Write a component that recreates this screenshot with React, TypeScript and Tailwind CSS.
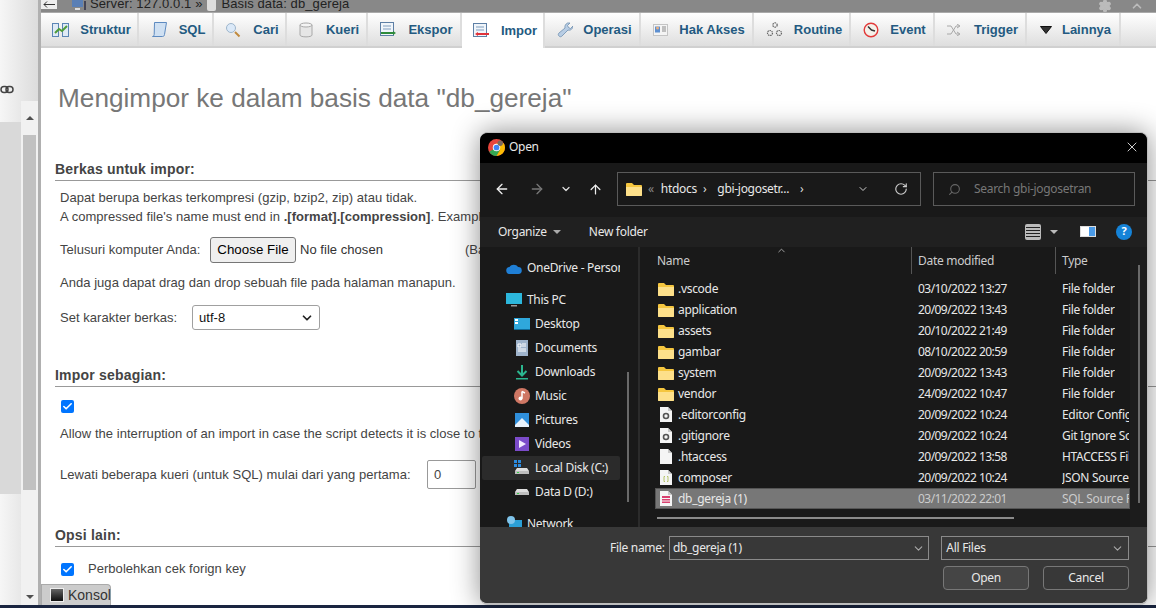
import { ReactNode } from "react";
import { Check, ChevronDown, RotateCw, Search, X, ArrowLeft, ArrowRight, ArrowUp, Settings, ChevronUp } from "lucide-react";

const tabs: { label: string; width: string; gap: string; active?: boolean; icon: ReactNode }[] = [
  {
    label: "Struktur",
    width: "w-[98px]",
    gap: "gap-[11px]",
    icon: (
      <svg width="17" height="16" viewBox="0 0 17 16">
        <rect x="0.5" y="1.5" width="6" height="13" fill="#dfeaf5" stroke="#5b85b5" />
        <rect x="10.5" y="1.5" width="6" height="13" fill="#dfeaf5" stroke="#5b85b5" />
        <path d="M3 11l4-4 3 2 5-5" fill="none" stroke="#4f9c3a" strokeWidth="2" />
      </svg>
    ),
  },
  {
    label: "SQL",
    width: "w-[75px]",
    gap: "gap-[11px]",
    icon: (
      <svg width="17" height="17" viewBox="0 0 17 17">
        <path d="M3.5 1.5h12l-2 12c-.2 1.500-1 2-2 2h-10c1 0 1.500-.8 1.700-2z" fill="#cfe0f2" stroke="#5d8ac0" />
      </svg>
    ),
  },
  {
    label: "Cari",
    width: "w-[73px]",
    gap: "gap-[12px]",
    icon: (
      <svg width="16" height="16" viewBox="0 0 16 16">
        <circle cx="6" cy="6" r="4.500" fill="#dbe9f8" stroke="#9db5cc" />
        <path d="M10 10l4.500 4.500" stroke="#c08a3e" strokeWidth="2" />
      </svg>
    ),
  },
  {
    label: "Kueri",
    width: "w-[81px]",
    gap: "gap-[13px]",
    icon: (
      <svg width="14" height="16" viewBox="0 0 14 16">
        <path d="M1 3v10c0 2.500 12 2.500 12 0V3z" fill="#e6e6e6" stroke="#a8a8a8" />
        <ellipse cx="7" cy="3" rx="6" ry="2" fill="#f4f4f4" stroke="#a8a8a8" />
      </svg>
    ),
  },
  {
    label: "Ekspor",
    width: "w-[94px]",
    gap: "gap-[11px]",
    icon: (
      <svg width="17" height="15" viewBox="0 0 17 15">
        <rect x="0.5" y="0.500" width="13" height="13" fill="#f0f5fa" stroke="#5d7fa5" />
        <path d="M3 4h8M3 7h8" stroke="#7f9dbd" />
        <path d="M1 11h12" stroke="#2e8b3a" strokeWidth="2" />
        <path d="M13 9l3 2-3 2z" fill="#2e8b3a" />
      </svg>
    ),
  },
  {
    label: "Impor",
    width: "w-[83px]",
    gap: "gap-[11px]",
    active: true,
    icon: (
      <svg width="17" height="15" viewBox="0 0 17 15">
        <rect x="0.5" y="0.500" width="13" height="13" fill="#f0f5fa" stroke="#5d7fa5" />
        <path d="M3 4h8M3 7h8" stroke="#7f9dbd" />
        <path d="M5 11h11" stroke="#e0323a" strokeWidth="2" />
        <path d="M5 9l-3 2 3 2z" fill="#e0323a" />
      </svg>
    ),
  },
  {
    label: "Operasi",
    width: "w-[96px]",
    gap: "gap-[10px]",
    icon: (
      <svg width="16" height="16" viewBox="0 0 16 16">
        <path d="M2 14c-1-1-1-2 0-3l6-5c-.5-2 .5-4 2.500-5h2.500l-2.500 2.500 1 2 2 1L16 4c0 2.500-2.500 5-5 4l-6 6c-1 1-2 1-3 0z" fill="#b8cde4" stroke="#6f8fb0" strokeWidth="0.8" />
      </svg>
    ),
  },
  {
    label: "Hak Akses",
    width: "w-[113px]",
    gap: "gap-[11px]",
    icon: (
      <svg width="15" height="12" viewBox="0 0 15 12">
        <rect x="0.5" y="0.500" width="14" height="11" fill="#f4f4f4" stroke="#c4c4c4" />
        <rect x="2" y="2.500" width="5" height="6" fill="#5d8fd0" />
        <circle cx="4.500" cy="4" r="1.500" fill="#e8b080" />
        <path d="M9 3h4M9 5h4M9 7h4" stroke="#8a8a8a" />
      </svg>
    ),
  },
  {
    label: "Routine",
    width: "w-[97px]",
    gap: "gap-[11px]",
    icon: (
      <svg width="17" height="17" viewBox="0 0 17 17" fill="none" stroke="#666">
        <circle cx="9" cy="4" r="2.200" strokeDasharray="1.500 .7" strokeWidth="1.200" />
        <circle cx="4" cy="12" r="2.500" strokeDasharray="1.500 .7" strokeWidth="1.200" />
        <circle cx="13" cy="12" r="2.500" strokeDasharray="1.500 .7" strokeWidth="1.200" />
      </svg>
    ),
  },
  {
    label: "Event",
    width: "w-[84px]",
    gap: "gap-[11px]",
    icon: (
      <svg width="16" height="16" viewBox="0 0 16 16">
        <circle cx="8" cy="8" r="6.800" fill="#f4f1ea" stroke="#e23a3a" strokeWidth="1.400" />
        <path d="M5 4.500L8.500 8l3.500 1" fill="none" stroke="#333" strokeWidth="1.500" />
      </svg>
    ),
  },
  {
    label: "Trigger",
    width: "w-[92px]",
    gap: "gap-[12px]",
    icon: (
      <svg width="15" height="12" viewBox="0 0 15 12" fill="none" stroke="#a8a8a8">
        <path d="M0 2h4l5 8h3M0 10h4l5-8h3M10 0l3 2-3 2M10 8l3 2-3 2" />
      </svg>
    ),
  },
  {
    label: "Lainnya",
    width: "w-[94px]",
    gap: "gap-[10px]",
    icon: (
      <svg width="12" height="8" viewBox="0 0 12 8">
        <path d="M.5.500h11L6 7.500z" fill="#333" stroke="#111" />
      </svg>
    ),
  },
];

const FolderIcon = () => (
  <svg width="16" height="14" viewBox="0 0 16 14" className="shrink-0">
    <path d="M0 2a1 1 0 0 1 1-1h5l2 2h7a1 1 0 0 1 1 1v9a1 1 0 0 1-1 1H1a1 1 0 0 1-1-1z" fill="#f5c63f" />
    <path d="M0 5h16v8a1 1 0 0 1-1 1H1a1 1 0 0 1-1-1z" fill="#fde08a" />
  </svg>
);

const FileIcon = ({ children }: { children?: ReactNode }) => (
  <svg width="12" height="15" viewBox="0 0 12 15" className="ml-[2px] shrink-0">
    <path d="M0 0h8l4 4v11H0z" fill="#f5f5f5" />
    <path d="M8 0l4 4H8z" fill="#c9c9c9" />
    {children}
  </svg>
);

const files: { name: string; date: string; type: string; icon: ReactNode; selected?: boolean }[] = [
  { name: ".vscode", date: "03/10/2022 13:27", type: "File folder", icon: <FolderIcon /> },
  { name: "application", date: "20/09/2022 13:43", type: "File folder", icon: <FolderIcon /> },
  { name: "assets", date: "20/10/2022 21:49", type: "File folder", icon: <FolderIcon /> },
  { name: "gambar", date: "08/10/2022 20:59", type: "File folder", icon: <FolderIcon /> },
  { name: "system", date: "20/09/2022 13:43", type: "File folder", icon: <FolderIcon /> },
  { name: "vendor", date: "24/09/2022 10:47", type: "File folder", icon: <FolderIcon /> },
  {
    name: ".editorconfig",
    date: "20/09/2022 10:24",
    type: "Editor Config",
    icon: (
      <FileIcon>
        <circle cx="6" cy="9" r="2.500" fill="none" stroke="#555" strokeWidth="1.600" />
      </FileIcon>
    ),
  },
  {
    name: ".gitignore",
    date: "20/09/2022 10:24",
    type: "Git Ignore Source",
    icon: (
      <FileIcon>
        <circle cx="6" cy="9" r="2.500" fill="none" stroke="#555" strokeWidth="1.600" />
      </FileIcon>
    ),
  },
  { name: ".htaccess", date: "20/09/2022 13:58", type: "HTACCESS File", icon: <FileIcon /> },
  {
    name: "composer",
    date: "20/09/2022 10:24",
    type: "JSON Source File",
    icon: (
      <FileIcon>
        <path d="M5 6.500H4v5h1M7 6.500h1v5H7" fill="none" stroke="#b5c46a" />
      </FileIcon>
    ),
  },
  {
    name: "db_gereja (1)",
    date: "03/11/2022 22:01",
    type: "SQL Source File",
    selected: true,
    icon: (
      <FileIcon>
        <rect x="2" y="5" width="8" height="7" fill="#d9406f" />
        <path d="M2 7.500h8M2 10h8" stroke="#f5f5f5" />
      </FileIcon>
    ),
  },
];

const WinIcon = ({ children, w = 16, h = 16 }: { children: ReactNode; w?: number; h?: number }) => (
  <svg width={w} height={h} viewBox={`0 0 ${w} ${h}`} className="shrink-0">
    {children}
  </svg>
);

const navItems: { label: string; icon: ReactNode; className: string }[] = [
  {
    label: "Desktop",
    className: "",
    icon: (
      <WinIcon>
        <rect y="2" width="16" height="12" fill="#2fa8dc" />
        <rect x="1" y="3" width="3" height="2" fill="#fff" />
        <rect x="1" y="6" width="3" height="2" fill="#fff" />
        <rect y="13" width="16" height="1" fill="#0f6b99" />
      </WinIcon>
    ),
  },
  {
    label: "Documents",
    className: "",
    icon: (
      <WinIcon>
        <rect x="2" width="12" height="16" fill="#9fb4cc" />
        <path d="M4 4h3v3H4zM8 4h4M8 6h4M4 9h8M4 11h8" stroke="#fff" fill="none" />
      </WinIcon>
    ),
  },
  {
    label: "Downloads",
    className: "",
    icon: (
      <WinIcon>
        <path d="M8 1v10M3.500 7L8 11.500 12.500 7" fill="none" stroke="#2bb68f" strokeWidth="2" />
        <rect x="2" y="14" width="12" height="1.500" fill="#2bb68f" />
      </WinIcon>
    ),
  },
  {
    label: "Music",
    className: "",
    icon: (
      <WinIcon>
        <circle cx="8" cy="8" r="8" fill="#cf7764" />
        <path d="M8 3.500v7" stroke="#fff" strokeWidth="1.500" />
        <circle cx="6.500" cy="10.500" r="2" fill="#fff" />
        <path d="M8 3.500l3 1.500" stroke="#fff" strokeWidth="1.500" />
      </WinIcon>
    ),
  },
  {
    label: "Pictures",
    className: "",
    icon: (
      <WinIcon>
        <rect x="1" y="1" width="14" height="14" fill="#2f8fdb" />
        <path d="M1 13l7-7 7 7v2H1z" fill="#e8f2fb" />
      </WinIcon>
    ),
  },
  {
    label: "Videos",
    className: "",
    icon: (
      <WinIcon>
        <rect x="1" y="1" width="14" height="14" fill="#7b4bc9" />
        <path d="M5 4l7 4-7 4z" fill="#f2eaff" />
      </WinIcon>
    ),
  },
  {
    label: "Local Disk (C:)",
    className: "bg-[#2b2b2b]",
    icon: (
      <WinIcon>
        <rect x="0" y="0" width="3" height="3" fill="#2a8be0" />
        <rect x="4" y="0" width="3" height="3" fill="#2a8be0" />
        <rect x="0" y="4" width="3" height="3" fill="#2a8be0" />
        <rect x="4" y="4" width="3" height="3" fill="#2a8be0" />
        <path d="M1 11l2-3h10l2 3z" fill="#dedede" />
        <rect x="1" y="11" width="14" height="3" fill="#bdbdbd" />
        <rect x="3" y="12" width="2" height="1" fill="#38d04a" />
      </WinIcon>
    ),
  },
  {
    label: "Data D (D:)",
    className: "",
    icon: (
      <WinIcon>
        <path d="M1 8l2-3h10l2 3z" fill="#dedede" />
        <rect x="1" y="8" width="14" height="3" fill="#bdbdbd" />
        <rect x="3" y="9" width="2" height="1" fill="#38d04a" />
      </WinIcon>
    ),
  },
];

function Sidebar() {
  return (
    <div className="flex w-[41px] shrink-0 border-r-[3px] border-[#b0b0b0] bg-gradient-to-r from-[#f6f6f6] to-[#dcdcdc]">
      <div className="flex w-[21px] flex-col">
        <div className="flex h-[122px] items-start pt-[85px]">
          <svg width="14" height="10" viewBox="0 0 14 10" fill="none" stroke="#444" strokeWidth="1.500">
            <rect x="1" y="1.500" width="7" height="6" rx="3" />
            <rect x="6" y="1.500" width="7" height="6" rx="3" />
          </svg>
        </div>
        <div className="h-[372px] bg-[#d9d9d9]" />
      </div>
      <div className="flex w-[17px] flex-col pt-[101px]">
        <div className="flex flex-1 flex-col items-center bg-[#f1f1f1]">
          <div className="flex h-[34px] w-full items-center justify-center">
            <div className="h-0 w-0 border-x-4 border-b-4 border-x-transparent border-b-[#505050]" />
          </div>
          <div className="h-[355px] w-[13px] bg-[#c1c1c1]" />
          <div className="flex flex-1 items-end justify-center pb-[6px]">
            <div className="h-0 w-0 border-x-4 border-t-4 border-x-transparent border-t-[#505050]" />
          </div>
        </div>
      </div>
    </div>
  );
}

function SectionTitle({ children, className }: { children: ReactNode; className: string }) {
  return (
    <div className={`ml-[14px] border-b border-[#999] pb-[2px] text-[14px] font-bold leading-[17px] tracking-[0.2px] text-[#444] ${className}`}>
      {children}
    </div>
  );
}

function NativeCheck({ className }: { className?: string }) {
  return (
    <span className={`flex h-[13px] w-[13px] items-center justify-center rounded-[2px] bg-[#0075ff] ${className ?? ""}`}>
      <Check size={11} strokeWidth={3.500} color="#fff" />
    </span>
  );
}

function PmaPage() {
  return (
    <div className="flex min-w-0 flex-1 flex-col bg-white text-[13px] tracking-[0.04px] text-[#444]">
      <div className="flex h-[13px] shrink-0 items-start overflow-hidden border-b border-[#aaa] bg-[#888]">
        <div className="flex h-[9px] w-[16px] items-center justify-center bg-[#eee]">
          <svg width="12" height="7" viewBox="0 0 12 7" fill="none" stroke="#333">
            <path d="M12 3.500H1M4 .500L1 3.500l3 3" />
          </svg>
        </div>
        <div className="ml-[15px] -mt-[5px] flex items-center text-[13px] leading-[15px] tracking-[0.1px] text-[#222]">
          <svg width="14" height="13" viewBox="0 0 14 13" className="mt-[3px]">
            <rect x="0" y="0" width="11" height="9" fill="#5a7fb5" />
            <rect x="3" y="10" width="5" height="2" fill="#ddd" />
            <rect x="12" y="3" width="2" height="9" fill="#445" />
          </svg>
          <span className="ml-[4px]">Server: 127.0.0.1 »</span>
          <svg width="9" height="13" viewBox="0 0 9 13" className="ml-[5px] mt-[3px]">
            <rect width="9" height="13" rx="2" fill="#ddd" />
          </svg>
          <span className="ml-[5px]">Basis data: db_gereja</span>
        </div>
        <div className="ml-auto -mt-[1px] flex items-center gap-[18px] pr-[12px]">
          <Settings size={14} color="#bbb" fill="#bbb" />
          <ChevronUp size={14} color="#bbb" strokeWidth={3} />
        </div>
      </div>
      <div className="flex h-[35px] shrink-0 border-b-2 border-[#d0d0d0] bg-gradient-to-b from-white to-[#dedede]">
        {tabs.map((tab) => (
          <div
            key={tab.label}
            className={`${tab.width} ${tab.gap} flex shrink-0 items-center justify-center border-r-2 border-[#ddd] pl-[5px] text-[13px] font-bold tracking-normal text-[#235a81] ${tab.active ? "-mb-[2px] bg-white" : ""}`}
          >
            {tab.icon}
            <span>{tab.label}</span>
          </div>
        ))}
      </div>
      <h2 className="ml-[17px] mt-[34px] text-[26.2px] leading-[32px] tracking-normal text-[#777]">
        Mengimpor ke dalam basis data "db_gereja"
      </h2>
      <SectionTitle className="mt-[47px]">Berkas untuk impor:</SectionTitle>
      <div className="ml-[19px] mt-[7px] whitespace-nowrap leading-[19px]">
        <p>Dapat berupa berkas terkompresi (gzip, bzip2, zip) atau tidak.</p>
        <p>
          A compressed file's name must end in <b>.[format].[compression]</b>. Example: <b>.sql.zip</b>
        </p>
      </div>
      <div className="ml-[19px] mt-[11px] flex h-[26px] items-center whitespace-nowrap">
        <span className="w-[150px]">Telusuri komputer Anda:</span>
        <span className="flex h-[26px] w-[86px] items-center justify-center rounded-[3px] border border-[#767676] bg-[#efefef] text-[13.3px] text-black">
          Choose File
        </span>
        <span className="ml-[4px] w-[165px] text-[#333]">No file chosen</span>
        <span>(Batas maksimum: 40 MiB)</span>
      </div>
      <p className="ml-[19px] mt-[10px] leading-[19px]">
        Anda juga dapat drag dan drop sebuah file pada halaman manapun.
      </p>
      <div className="ml-[19px] mt-[13px] flex h-[25px] items-center">
        <span className="w-[132px]">Set karakter berkas:</span>
        <span className="flex h-[25px] w-[128px] items-center justify-between rounded-[3px] border border-[#a0a0a0] bg-white pl-[6px] pr-[5px] text-[#111]">
          utf-8
          <ChevronDown size={14} strokeWidth={3} color="#222" />
        </span>
      </div>
      <SectionTitle className="mt-[37px]">Impor sebagian:</SectionTitle>
      <NativeCheck className="ml-[20px] mt-[13px]" />
      <p className="ml-[19px] mt-[11px] whitespace-nowrap leading-[19px]">
        Allow the interruption of an import in case the script detects it is close to the PHP timeout limit.
      </p>
      <div className="ml-[19px] mt-[17px] flex h-[29px] items-center whitespace-nowrap">
        <span className="w-[367px]">Lewati beberapa kueri (untuk SQL) mulai dari yang pertama:</span>
        <span className="flex h-[29px] w-[49px] items-center rounded-[2px] border border-[#999] bg-white pl-[6px]">0</span>
      </div>
      <SectionTitle className="mt-[38px]">Opsi lain:</SectionTitle>
      <div className="ml-[20px] mt-[14px] flex items-center gap-[14px] leading-[16px]">
        <NativeCheck />
        Perbolehkan cek forign key
      </div>
      <div className="mt-auto flex h-[21px] w-[70px] items-center gap-[4px] rounded-tr-[4px] border border-b-0 border-[#aaa] bg-[#ccc] pl-[8px] text-[14px] tracking-normal text-[#333]">
        <span className="h-[14px] w-[14px] shrink-0 border border-[#eee] bg-gradient-to-b from-[#666] to-[#111]" />
        Konsol
      </div>
    </div>
  );
}

function OpenDialog() {
  return (
    <div className="absolute left-[480px] top-[132px] flex h-[473px] w-[668px] flex-col overflow-hidden rounded-[8px] border-b-2 border-r border-t border-[#bdbdbd] bg-[#191919] font-['Noto_Sans',sans-serif] text-[12px] tracking-[-0.3px] text-[#e8e8e8] shadow-[0_0_28px_rgba(0,0,0,0.45)]">
      <div className="flex h-[30px] shrink-0 items-center bg-black pb-[2px] pl-[8px] pr-[7px]">
        <svg width="17" height="17" viewBox="0 0 16 16">
          <circle cx="8" cy="8" r="8" fill="#e8453c" />
          <path d="M8 8L1.100 12a8 8 0 0 0 7 4l3.500-6z" fill="#34a853" />
          <path d="M8 8l3.500 2L8 16a8 8 0 0 0 6.900-12H8z" fill="#fbbc05" />
          <circle cx="8" cy="8" r="3.500" fill="#fff" />
          <circle cx="8" cy="8" r="2.700" fill="#4285f4" />
          <circle cx="11.500" cy="4" r="2.500" fill="#7a6a5e" />
        </svg>
        <span className="ml-[4px]">Open</span>
        <X size={16} strokeWidth={1.200} className="ml-auto text-white" />
      </div>
      <div className="flex h-[54px] shrink-0 items-center pb-[2px] pl-[14px]">
        <ArrowLeft size={16} className="text-[#eee]" />
        <ArrowRight size={16} className="ml-[19px] text-[#777]" />
        <ChevronDown size={12} strokeWidth={2.500} className="ml-[15px] text-[#ddd]" />
        <ArrowUp size={15} className="ml-[16px] text-[#eee]" />
        <div className="ml-[14px] flex h-[34px] w-[304px] items-center border border-[#5a5a5a] pl-[8px] pr-[12px]">
          <FolderIcon />
          <span className="ml-[6px] text-[#888]">«</span>
          <span className="ml-[7px]">htdocs</span>
          <span className="ml-[6px] text-[#ddd]">›</span>
          <span className="ml-[11px]">gbi-jogosetr...</span>
          <span className="ml-[11px] text-[#ddd]">›</span>
          <ChevronDown size={12} className="ml-auto mr-[2px] text-[#ccc]" />
          <RotateCw size={14} className="ml-[23px] text-[#ccc]" />
        </div>
        <div className="ml-[12px] flex h-[34px] w-[202px] items-center border border-[#5a5a5a] pl-[14px] text-[#777]">
          <Search size={13} className="-scale-x-100 text-[#666]" />
          <span className="ml-[13px]">Search gbi-jogosetran</span>
        </div>
      </div>
      <div className="flex h-[30px] shrink-0 items-center bg-[#202020] pb-[1px] pl-[18px] pr-[15px]">
        <span>Organize</span>
        <span className="ml-[6px] h-0 w-0 border-x-4 border-t-4 border-x-transparent border-t-[#aaa]" />
        <span className="ml-[28px]">New folder</span>
        <span className="ml-auto flex h-[16px] w-[16px] flex-col justify-center gap-[2px] rounded-[2px] bg-[#bbb] px-[1px]">
          <span className="h-[1px] bg-[#222]" />
          <span className="h-[1px] bg-[#222]" />
          <span className="h-[1px] bg-[#222]" />
          <span className="h-[1px] bg-[#222]" />
        </span>
        <span className="ml-[9px] h-0 w-0 border-x-4 border-t-4 border-x-transparent border-t-[#bbb]" />
        <span className="ml-[22px] flex h-[11px] w-[16px] border border-[#ddd] bg-white">
          <span className="ml-auto w-[6px] bg-[#4a9be8]" />
        </span>
        <span className="ml-[20px] flex h-[16px] w-[16px] items-center justify-center rounded-full bg-[#1583d8] text-[11px] font-bold text-white">?</span>
      </div>
      <div className="flex h-[280px] shrink-0">
        <div className="relative flex w-[160px] shrink-0 flex-col overflow-hidden border-r-2 border-[#2b2b2b] pl-[2px] pr-[18px]">
          <div className="mt-[9px] flex h-[24px] shrink-0 items-center gap-[5px] overflow-hidden whitespace-nowrap pl-[24px]">
            <svg width="16" height="11" viewBox="0 0 16 11" className="shrink-0">
              <path d="M4 11a3.500 3.500 0 0 1-.500-7A5 5 0 0 1 12 4a3.500 3.500 0 0 1 .500 7z" fill="#1f7fd6" />
            </svg>
            <span>OneDrive - Personal</span>
          </div>
          <div className="mt-[8px] flex h-[24px] shrink-0 items-center gap-[5px] pl-[24px]">
            <WinIcon>
              <rect y="1" width="16" height="11" fill="#2cb7dc" />
              <rect x="5" y="13" width="6" height="1.500" fill="#999" />
            </WinIcon>
            This PC
          </div>
          {navItems.map((item) => (
            <div key={item.label} className={`${item.className} flex h-6 shrink-0 items-center gap-[5px] whitespace-nowrap rounded-[2px] pl-[32px]`}>
              {item.icon}
              {item.label}
            </div>
          ))}
          <div className="mt-[8px] flex h-[24px] shrink-0 items-center gap-[5px] pl-[24px]">
            <WinIcon>
              <rect x="3" y="4" width="13" height="11" fill="#2b9fd6" />
              <circle cx="5" cy="4" r="4" fill="#7fc4ea" />
            </WinIcon>
            Network
          </div>
          <div className="absolute right-[9px] top-[125px] h-[130px] w-[2px] bg-[#6a6a6a]" />
        </div>
        <div className="relative flex min-w-0 flex-1 flex-col">
          <div className="relative h-[31px] shrink-0 pl-[17px] pt-[5px] text-[#ccc]">
            Name
            <ChevronUp size={11} className="absolute left-[136px] -top-[2px] text-[#aaa]" />
            <div className="absolute left-[271px] top-0 flex h-[27px] items-center border-l border-[#555] pl-[6px]">Date modified</div>
            <div className="absolute left-[415px] top-0 flex h-[27px] items-center border-l border-[#555] pl-[6px]">Type</div>
          </div>
          <div className="flex w-[490px] flex-col pl-[15px]">
            {files.map((f) => (
              <div key={f.name} className={`flex h-[21px] items-center border ${f.selected ? "border-[#555] bg-[#777]" : "border-transparent"}`}>
                <span className="flex w-[22px] shrink-0 pl-[2px]">{f.icon}</span>
                <span className="w-[240px] shrink-0">{f.name}</span>
                <span className={`w-[144px] shrink-0 tracking-[-0.55px] ${f.selected ? "text-[#ccc]" : ""}`}>{f.date}</span>
                <span className={`overflow-hidden whitespace-nowrap ${f.selected ? "text-[#ccc]" : ""}`}>{f.type}</span>
              </div>
            ))}
          </div>
          <div className="ml-[17px] mt-[8px] h-[2px] w-[357px] bg-[#8a8a8a]" />
          <div className="absolute bottom-0 right-0 top-0 w-[17px] bg-[#1c1c1c]">
            <div className="ml-[8px] mt-[18px] h-[238px] w-[2px] bg-[#6a6a6a]" />
          </div>
        </div>
      </div>
      <div className="flex flex-1 flex-col bg-[#383838] pl-[130px] pr-[18px] pt-[9px]">
        <div className="flex items-center">
          <span className="w-[59px] whitespace-nowrap">File name:</span>
          <div className="flex h-[24px] w-[261px] items-center justify-between border border-[#8a8a8a] px-[3px]">
            db_gereja (1)
            <ChevronDown size={13} className="text-[#aaa]" />
          </div>
          <div className="ml-[12px] flex h-[24px] w-[188px] items-center justify-between border border-[#8a8a8a] px-[4px]">
            All Files
            <ChevronDown size={13} className="text-[#aaa]" />
          </div>
        </div>
        <div className="mt-[6px] flex justify-end gap-[14px]">
          <span className="flex h-[24px] w-[86px] items-center justify-center rounded-[4px] border border-[#777] bg-[#454545]">Open</span>
          <span className="flex h-[24px] w-[86px] items-center justify-center rounded-[4px] border border-[#777]">Cancel</span>
        </div>
      </div>
    </div>
  );
}

export default function App() {
  return (
    <div className="relative flex h-[608px] w-[1156px] flex-col overflow-hidden bg-white font-['Liberation_Sans',sans-serif]">
      <div className="flex min-h-0 flex-1">
        <Sidebar />
        <PmaPage />
      </div>
      <div className="h-[3px] shrink-0 bg-[#1a2540]" />
      <OpenDialog />
    </div>
  );
}
